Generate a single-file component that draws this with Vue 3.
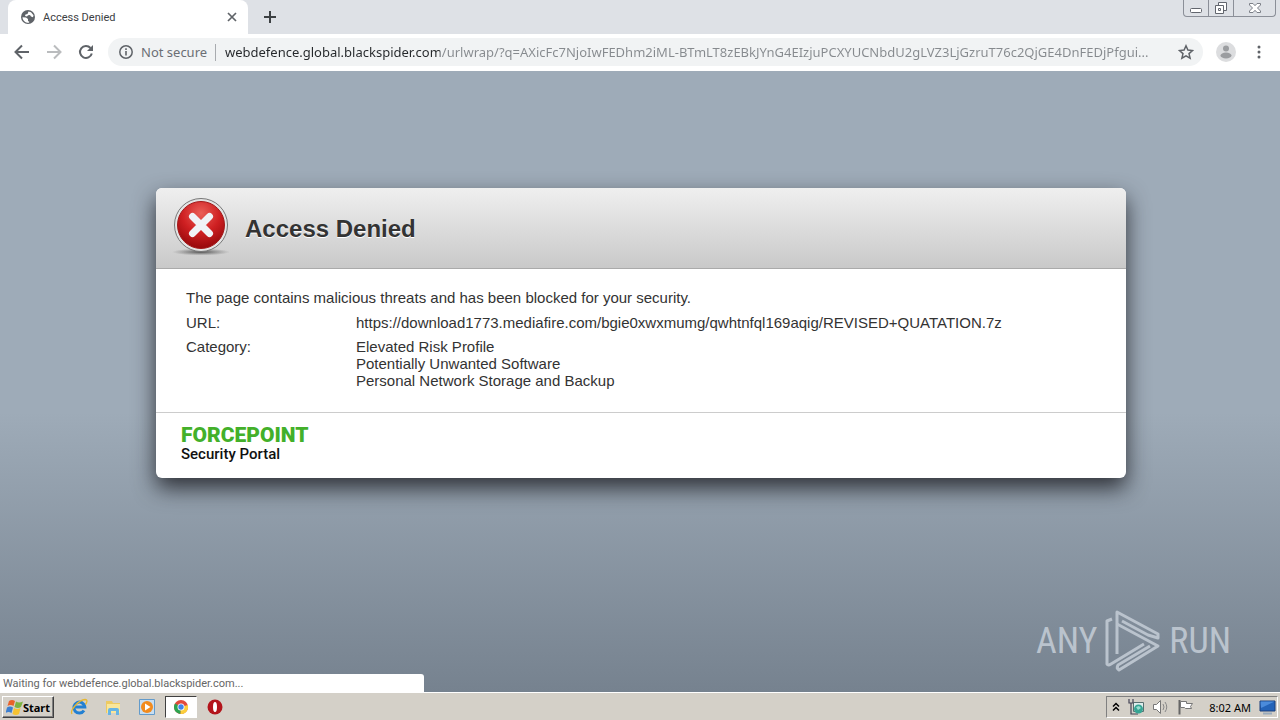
<script setup>
import { ref } from 'vue'

const address = ref('webdefence.global.blackspider.com/urlwrap/?q=AXicFc7NjoIwFEDhm2iML-BTmLT8zEBkJYnG4EIzjuPCXYUCNbdU2gLVZ3LjGzruT76c2QjGE4DnFEDjPfgui...')
const categories = ['Elevated Risk Profile', 'Potentially Unwanted Software', 'Personal Network Storage and Backup']
</script>

<template>
  <div class="desktop">
    <header class="tabstrip">
      <div class="tab">
        <svg class="globe" viewBox="0 0 16 16" aria-hidden="true">
          <circle cx="8" cy="8" r="7" fill="#5f6368" />
          <path d="M2.500 8.200l3.500.3 2 1.500v2l1.300.8-.3 1C5.500 14 2.700 11.500 2.500 8.200zM8.500 2.400l2.500.8 2.500 3-.5 2-2-.6-1-1.600-2 .2L7 7.500 5 7l.5-1.500 2-.5z" fill="#fff" />
        </svg>
        <span class="tab-title">Access Denied</span>
        <button class="icon-btn close" aria-label="Close tab">
          <svg viewBox="0 0 10 10"><path d="M1 1l8 8M9 1L1 9" stroke="#5f6368" stroke-width="1.700" /></svg>
        </button>
      </div>
      <button class="icon-btn new-tab" aria-label="New tab">
        <svg viewBox="0 0 12 12"><path d="M6 0v12M0 6h12" stroke="#3c4043" stroke-width="2" /></svg>
      </button>
      <div class="window-controls">
        <button aria-label="Minimize"><svg width="24" height="16" viewBox="0 0 24 16"><rect x="6.500" y="8.500" width="11" height="4" rx="1" fill="#fff" stroke="#62666e" /></svg></button>
        <button aria-label="Restore"><svg width="24" height="16" viewBox="0 0 24 16"><path d="M9.500 2.500h8v8h-8z" fill="#fff" stroke="#62666e" /><path d="M6.500 5.500h8v8h-8z" fill="#fff" stroke="#62666e" /><path d="M9.500 8.500h2v2h-2z" fill="none" stroke="#62666e" /></svg></button>
        <button aria-label="Close"><svg width="41" height="16" viewBox="0 0 41 16"><path d="M15.500 3.500h3.500l2 2.200 2-2.200h3.500v1.500L23.500 8l3 3v1.500H23l-2-2.200-2 2.200h-3.500V11l3-3-3-3z" fill="#fff" stroke="#7b7f87" /></svg></button>
      </div>
    </header>

    <nav class="toolbar" aria-label="Browser toolbar">
      <button class="icon-btn nav" aria-label="Back"><svg viewBox="0 0 16 16"><path d="M15 8H2M8 1.500L1.500 8 8 14.500" fill="none" stroke="#5f6368" stroke-width="2" /></svg></button>
      <button class="icon-btn nav" aria-label="Forward"><svg viewBox="0 0 16 16"><path d="M1 8h13M8 1.500L14.500 8 8 14.500" fill="none" stroke="#babcbe" stroke-width="2" /></svg></button>
      <button class="icon-btn nav" aria-label="Reload"><svg viewBox="0 0 16 16"><path d="M13.800 9.500A6 6 0 1 1 12.500 4" fill="none" stroke="#5f6368" stroke-width="2" /><path d="M15 1v6H9z" fill="#5f6368" /></svg></button>
      <div class="omnibox">
        <svg class="info" viewBox="0 0 14 14" aria-hidden="true"><circle cx="7" cy="7" r="6.200" fill="none" stroke="#5f6368" stroke-width="1.500" /><path d="M7 6v4.500M7 3.300v1.600" stroke="#5f6368" stroke-width="1.600" /></svg>
        <label class="secure" for="address">Not secure</label>
        <input id="address" v-model="address" class="address" type="text" spellcheck="false" />
        <button class="icon-btn star" aria-label="Bookmark this page"><svg viewBox="0 0 16 16"><path d="M8 1.800l1.900 4.300 4.600.4-3.500 3.100 1.100 4.600L8 11.800l-4.100 2.400L5 9.600 1.500 6.500l4.600-.4z" fill="none" stroke="#5f6368" stroke-width="1.500" /></svg></button>
      </div>
      <button class="icon-btn profile" aria-label="Profile"><svg viewBox="0 0 20 20"><circle cx="10" cy="10" r="10" fill="#dcdddf" /><circle cx="10" cy="6.500" r="3" fill="#9b9da0" /><ellipse cx="10" cy="13.500" rx="5.500" ry="3" fill="#9b9da0" /></svg></button>
      <button class="icon-btn menu" aria-label="Menu"><svg viewBox="0 0 4 14"><circle cx="2" cy="2" r="1.500" fill="#5f6368" /><circle cx="2" cy="7" r="1.500" fill="#5f6368" /><circle cx="2" cy="12" r="1.500" fill="#5f6368" /></svg></button>
    </nav>

    <main class="page">
      <section class="card">
        <div class="card-head">
          <svg class="denied" viewBox="0 0 60 60" aria-hidden="true">
            <defs>
              <radialGradient id="red" cx=".5" cy=".25" r=".8"><stop offset="0" stop-color="#ea5f58" /><stop offset=".5" stop-color="#cf2022" /><stop offset="1" stop-color="#8e0508" /></radialGradient>
              <radialGradient id="floor"><stop offset="0" stop-color="#333" stop-opacity=".8" /><stop offset="1" stop-color="#555" stop-opacity="0" /></radialGradient>
            </defs>
            <ellipse cx="30" cy="54" rx="29" ry="3.500" fill="url(#floor)" />
            <circle cx="30" cy="27" r="26.500" fill="#e4e4e4" stroke="#777" />
            <circle cx="30" cy="27" r="23.500" fill="url(#red)" stroke="#a31a1a" />
            <path d="M21.500 18.500l17 17M38.500 18.500l-17 17" stroke="#f0f2f6" stroke-width="7" stroke-linecap="round" />
          </svg>
          <h1>Access Denied</h1>
        </div>
        <div class="card-body">
          <p>The page contains malicious threats and has been blocked for your security.</p>
          <dl>
            <dt>URL:</dt>
            <dd>https://download1773.mediafire.com/bgie0xwxmumg/qwhtnfql169aqig/REVISED+QUATATION.7z</dd>
            <dt>Category:</dt>
            <dd><div v-for="c in categories" :key="c">{{ c }}</div></dd>
          </dl>
        </div>
        <footer class="card-foot">
          <div class="brand">FORCEPOINT</div>
          <div class="product">Security Portal</div>
        </footer>
      </section>

      <div class="watermark">
        <span>ANY</span>
        <svg width="56" height="62" viewBox="0 0 56 62" aria-hidden="true">
          <path d="M7 9L2 11v43q1 2 4 0l33-20" />
          <path d="M12 44V2l41 22v4L43 25 17 11" />
          <path d="M12 14l41 22L14 60q-3-2-1-5l32-19" />
        </svg>
        <span>RUN</span>
      </div>
      <div class="status">Waiting for webdefence.global.blackspider.com...</div>
    </main>

    <footer class="taskbar">
      <button class="start">
        <svg width="17" height="18" viewBox="1 0 17 18" aria-hidden="true">
          <path d="M4 3q3-2 6 0L8.500 8q-3-2-6 0z" fill="#e9622a" /><path d="M11 3.500q3 2 7 0L16 9q-3 2-6.500 0z" fill="#7cb342" />
          <path d="M2 9.500q3-2 6 0L6.500 15q-3-2-6 0z" fill="#3d7fd0" /><path d="M9 10q3 2 6.500 0L14 16q-3 2-6.500 0z" fill="#f7c331" />
        </svg>Start
      </button>
      <div class="apps">
        <button aria-label="Internet Explorer"><svg viewBox="0 0 18 18"><path d="M14 12.500A5.500 5.500 0 1 1 14.800 9H5" fill="none" stroke="#2380d2" stroke-width="3" /><path d="M2 16C-.5 12 9 2 15 1.500c3 0 2 3 .5 5" fill="none" stroke="#e7b730" stroke-width="1.300" /></svg></button>
        <button aria-label="Explorer"><svg viewBox="0 0 18 18"><path d="M2 3h6l1 2h7v10H2z" fill="#edca62" /><path d="M3 6h13v9H3z" fill="#f9e69a" /><path d="M4 17v-5q0-2 2-2h7q2 0 2 2v5h-3v-4H7v4z" fill="#66b4e4" /></svg></button>
        <button aria-label="Media Player"><svg viewBox="0 0 18 18"><path d="M1.500 1.500h15v15h-15z" fill="#c8def1" stroke="#639bcb" /><circle cx="9" cy="9" r="6" fill="#f28b1e" /><path d="M7 5.500v7L12.500 9z" fill="#fff" /></svg></button>
        <button class="active" aria-label="Chrome"><svg viewBox="0 0 18 18"><circle cx="9" cy="9" r="7" fill="#e24a3b" /><path d="M9 9L3 5.400A7 7 0 0 0 8.500 16z" fill="#2da450" /><path d="M9 9l6.800-2A7 7 0 0 1 8.500 16z" fill="#fbce3c" /><circle cx="9" cy="9" r="3.500" fill="#fff" /><circle cx="9" cy="9" r="2.700" fill="#3f83ea" /></svg></button>
        <button aria-label="Opera"><svg viewBox="0 0 18 18"><circle cx="9" cy="9" r="7.500" fill="#b3141b" /><ellipse cx="9" cy="9" rx="2" ry="5" fill="#fff" /></svg></button>
      </div>
      <div class="tray">
        <svg width="8" height="10" viewBox="0 0 8 10" aria-hidden="true"><path d="M1 4.500l3-3 3 3M1 8.500l3-3 3 3" fill="none" stroke="#000" stroke-width="1.500" /></svg>
        <svg class="net" width="16" height="16" viewBox="0 0 16 16" aria-hidden="true"><path d="M5.500 3.500h10v9h-10z" fill="#dfeeee" stroke="#587070" /><path d="M1 0v4h4V0M3 4v11h7" fill="none" stroke="#445" stroke-width="1.200" /><circle cx="10.500" cy="10" r="4.500" fill="#37a594" /><path d="M8 8l3-1 2 2-3 2z" fill="#9bded1" /></svg>
        <svg class="vol" width="17" height="16" viewBox="0 0 17 16" aria-hidden="true"><path d="M1.500 5.500h3l4-4v13l-4-4h-3z" fill="#fff" stroke="#777" /><path d="M11 5q2 3 0 6M13 3q3.500 5 0 10" fill="none" stroke="#888" /></svg>
        <svg class="flag" width="17" height="16" viewBox="0 0 17 16" aria-hidden="true"><path d="M2.500 1v14.500" stroke="#666" stroke-width="2" /><path d="M3.500 2.500h6v2h6l-2 3 1 2h-6l-1-1h-4z" fill="#fff" stroke="#777" /></svg>
        <time>8:02 AM</time>
        <svg width="17" height="15" viewBox="0 0 17 15" aria-hidden="true"><path d="M1 1h15v10H1z" fill="#2463b8" stroke="#1b3f7a" /><path d="M1.500 1.500h14L2 8z" fill="#4b8bdb" /><path d="M4 13.500h9" stroke="#9ab" stroke-width="2" /></svg>
      </div>
    </footer>
  </div>
</template>

<style>
body { margin: 0; }
</style>

<style scoped>
.desktop { height: 100vh; display: flex; flex-direction: column; overflow: hidden; font-family: "Noto Sans", sans-serif; font-size: 11px; color: #333; }
button { font: inherit; color: inherit; border: 0; margin: 0; padding: 0; background: none; display: flex; align-items: center; justify-content: center; }
svg { display: block; flex: none; }
.tabstrip { height: 34px; flex: none; display: flex; background: #dee1e6; padding-left: 8px; }
.tab { box-sizing: border-box; width: 240px; display: flex; align-items: center; padding: 0 11px 0 12px; background: #fff; border-radius: 8px 8px 0 0; }
.globe { width: 16px; height: 16px; }
.tab-title { flex: 1; margin-left: 7px; color: #3c4043; font-family: Roboto, sans-serif; }
.close svg { width: 10px; height: 10px; }
.new-tab { width: 44px; }
.new-tab svg { width: 12px; height: 12px; }
.window-controls { display: flex; height: 16px; margin-left: auto; margin-right: 4px; border: 1px solid #8b8f98; border-top: 0; border-radius: 0 0 4px 4px; }
.window-controls button + button { border-left: 1px solid #8b8f98; }
.toolbar { height: 37px; flex: none; box-sizing: border-box; display: flex; align-items: center; background: #fff; padding: 0 5px 1px 6px; }
.nav { width: 32px; height: 32px; }
.nav svg { width: 16px; height: 16px; }
.omnibox { flex: 1; min-width: 0; height: 28px; margin-left: 6px; display: flex; align-items: center; background: #f1f3f4; border-radius: 14px; padding: 0 9px 0 11px; font-size: 13px; }
.info { width: 14px; height: 14px; }
.secure { margin-left: 8px; width: 74px; color: #6b6f74; border-right: 1px solid #a8abaf; line-height: 17px; white-space: nowrap; }
.address { flex: 1; min-width: 0; height: 28px; margin: 0 12px 0 9px; padding: 0; border: 0; outline: 0; font: inherit; color: #80868b; background: linear-gradient(90deg, #25282b 215px, #868a8e 215px); background-clip: text; -webkit-background-clip: text; -webkit-text-fill-color: transparent; }
.star svg { width: 16px; height: 16px; }
.profile { margin-left: 13px; }
.profile svg { width: 20px; height: 20px; }
.menu { width: 32px; margin-left: 7px; }
.menu svg { width: 4px; height: 14px; }
.page { flex: 1; min-height: 0; position: relative; background: linear-gradient(#9eabb8 0%, #9eabb8 55%, #76828f 100%); padding: 117px 154px 0 156px; }
.card { border-radius: 6px; background: #fff; box-shadow: 0 10px 22px rgba(20, 20, 25, .8); font-family: "Liberation Sans", Arial, sans-serif; font-size: 15px; line-height: 17px; }
.card-head { height: 80px; display: flex; align-items: center; border-bottom: 1px solid #aaa; border-radius: 6px 6px 0 0; background: linear-gradient(#efefef, #c9c9c9); }
.denied { width: 60px; height: 60px; margin-left: 15px; }
h1 { margin: 2px 0 0 14px; font-size: 24px; line-height: 28px; color: #333; text-shadow: 0 1px 0 #fff; }
.card-body { padding: 20px 30px 23px; }
p { margin: 0 0 8px; }
dl { margin: 0; display: grid; grid-template-columns: 170px 1fr; row-gap: 7px; }
dd { margin: 0; }
.card-foot { border-top: 1px solid #ccc; padding: 11px 25px 16px; font-family: Roboto, sans-serif; }
.brand { font-size: 21px; line-height: 22px; font-weight: 900; color: #43b02a; }
.product { font-size: 15px; line-height: 16px; font-weight: 500; color: #111; }
.watermark { position: absolute; right: 49px; bottom: 20px; display: flex; align-items: center; gap: 8px; font-family: "Liberation Sans Narrow", "Roboto Condensed", "Liberation Sans", sans-serif; font-size: 36px; line-height: 62px; color: #bac3cd; }
.watermark path { fill: none; stroke: #bac3cd; stroke-width: 3; stroke-linejoin: round; }
.status { position: absolute; left: 0; bottom: 0; box-sizing: border-box; width: 424px; height: 18px; padding: 1px 0 0 3px; line-height: 18px; background: #fff; border-top-right-radius: 3px; color: #666; font-family: Roboto, sans-serif; }
.taskbar { height: 28px; flex: none; box-sizing: border-box; display: flex; align-items: center; background: #d4d0c8; border-top: 1px solid #fff; padding: 1px 2px 0; }
.start { width: 52px; height: 22px; border: 1px solid; border-color: #fff #404040 #404040 #fff; box-shadow: inset -1px -1px #808080; font-weight: 700; color: #000; }
.apps { display: flex; gap: 2px; margin-left: 9px; }
.apps button { width: 32px; height: 22px; box-sizing: border-box; }
.apps svg { width: 18px; height: 18px; }
.apps .active { background: #fff; border: 1px solid; border-color: #404040 #fff #fff #404040; }
.tray { margin-left: auto; height: 22px; box-sizing: border-box; display: flex; align-items: center; border: 1px solid; border-color: #808080 #fff #fff #808080; padding: 0 1px 0 5px; color: #000; }
.net, .vol, .flag { margin-left: 8px; }
time { margin: 0 8px 0 15px; white-space: nowrap; }
</style>
